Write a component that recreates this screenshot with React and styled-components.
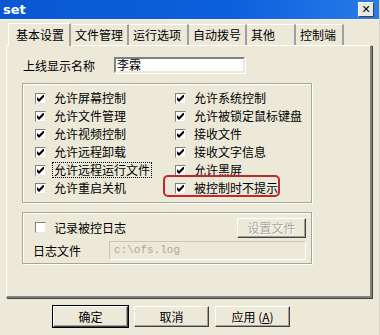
import React from 'react'
import styled, { createGlobalStyle } from 'styled-components'

const GlobalStyle = createGlobalStyle`
  html, body {
    margin: 0;
    padding: 0;
    background: #ece9d8;
  }
  body {
    font-family: "Noto Sans CJK SC", "DejaVu Sans", sans-serif;
    font-size: 12px;
    color: #000;
  }
`

const leftItems = ['允许屏幕控制', '允许文件管理', '允许视频控制', '允许远程卸载', '允许远程运行文件', '允许重启关机']
const rightItems = ['允许系统控制', '允许被锁定鼠标键盘', '接收文件', '接收文字信息', '允许黑屏', '被控制时不提示']
const tabs = [
  { label: '基本设置', width: 63 },
  { label: '文件管理', width: 58 },
  { label: '运行选项', width: 60 },
  { label: '自动拨号', width: 58 },
  { label: '其他', width: 49 },
  { label: '控制端', width: 48 },
]

const Check = ({ checked }) => (
  <Box>
    {checked && (
      <svg width="7" height="7" viewBox="0 0 7 7">
        <path d="M0 2 L2 4 L7 -1 L7 2 L2 7 L0 5 Z" />
      </svg>
    )}
  </Box>
)

export default function App() {
  return (
    <Window>
      <GlobalStyle />
      <TitleBar>
        <span>set</span>
        <CloseButton>✕</CloseButton>
      </TitleBar>

      <TabStrip>
        {tabs.map((t, i) => (
          <Tab key={t.label} active={i === 0} width={t.width}>{t.label}</Tab>
        ))}
      </TabStrip>

      <Panel>
        <NameRow>
          <NameLabel>上线显示名称</NameLabel>
          <TextInput>李霖</TextInput>
        </NameRow>

        <GroupBox>
          <Grid>
            {leftItems.map((label, i) => (
              <React.Fragment key={label}>
                <CheckRow>
                  <Check checked />
                  <Label focused={i === 4}>{label}</Label>
                </CheckRow>
                <CheckRow highlight={i === 5}>
                  <Check checked />
                  <Label>{rightItems[i]}</Label>
                </CheckRow>
              </React.Fragment>
            ))}
          </Grid>
        </GroupBox>

        <LogGroup>
          <LogRow>
            <CheckRow>
              <Check checked={false} />
              <Label>记录被控日志</Label>
            </CheckRow>
            <Button disabled>设置文件</Button>
          </LogRow>
          <LogRow>
            <FileLabel>日志文件</FileLabel>
            <DisabledInput>c:\ofs.log</DisabledInput>
          </LogRow>
        </LogGroup>
      </Panel>

      <ButtonBar>
        <Button primary>确定</Button>
        <Button>取消</Button>
        <Button>应用 (<u>A</u>)</Button>
      </ButtonBar>
    </Window>
  )
}

const Window = styled.div`
  width: 380px;
  height: 335px;
  background: #ece9d8;
  display: flex;
  flex-direction: column;
  overflow: hidden;
  border-right: 1px solid #d4d0c8;
  box-sizing: border-box;
`

const TitleBar = styled.div`
  height: 19px;
  flex: none;
  display: flex;
  align-items: center;
  justify-content: space-between;
  padding: 0 5px 0 3px;
  background: linear-gradient(90deg, #0a57d4 0%, #0c5fdc 60%, #2a7be8 100%);
  color: #fff;
  font-family: "DejaVu Sans", "Liberation Sans", sans-serif;
  font-weight: bold;
  font-size: 13px;
  border-bottom: 1px solid #f4f4f0;
`

const CloseButton = styled.div`
  width: 14px;
  height: 13px;
  display: flex;
  align-items: center;
  justify-content: center;
  background: #e8e8e4;
  border: 1px solid #fff;
  border-right-color: #404040;
  border-bottom-color: #404040;
  color: #000;
  font-size: 11px;
  font-weight: bold;
  line-height: 1;
`

const TabStrip = styled.div`
  display: flex;
  align-items: flex-end;
  height: 23px;
  margin-top: 2px;
  padding-left: 8px;
  flex: none;
  position: relative;
  z-index: 1;
`

const Tab = styled.div`
  width: ${({ width }) => width}px;
  height: ${({ active }) => (active ? 23 : 21)}px;
  box-sizing: border-box;
  padding-left: ${({ active }) => (active ? 7 : 4)}px;
  padding-top: ${({ active }) => (active ? 3 : 2)}px;
  line-height: 16px;
  white-space: nowrap;
  background: #ece9d8;
  border-top: 1px solid #fff;
  border-left: ${({ active }) => (active ? '1px solid #fff' : 'none')};
  border-right: 2px solid #a0a0a0;
  margin-bottom: ${({ active }) => (active ? -1 : 0)}px;
`

const Panel = styled.div`
  margin: 0 7px 0 6px;
  height: 253px;
  flex: none;
  box-sizing: border-box;
  border: 1px solid #fff;
  border-right: 2px solid #808080;
  border-bottom: 2px solid #808080;
  box-shadow: 1px 1px 0 #404040;
  padding: 10px 0 0 15px;
  display: flex;
  flex-direction: column;
`

const NameRow = styled.div`
  display: flex;
  align-items: center;
  height: 18px;
  gap: 12px;
`

const NameLabel = styled.span`
  width: 79px;
  padding-left: 1px;
`

const TextInput = styled.div`
  width: 131px;
  height: 16px;
  box-sizing: border-box;
  background: #fff;
  border: 2px solid #808080;
  border-right-color: #ece9d8;
  border-bottom-color: #ece9d8;
  padding-left: 1px;
  line-height: 12px;
  box-shadow: 1px 1px 0 #fff;
`

const GroupBox = styled.div`
  margin-top: 9px;
  width: 290px;
  height: 120px;
  box-sizing: border-box;
  border: 1px solid #a6a59c;
  box-shadow: inset 1px 1px 0 #fff, 1px 1px 0 #fff;
  padding: 5px 0 0 12px;
`

const Grid = styled.div`
  display: grid;
  grid-template-columns: 140px 1fr;
  grid-auto-rows: 18px;
`

const CheckRow = styled.div`
  display: flex;
  align-items: center;
  gap: 7px;
  position: relative;

  ${({ highlight }) =>
    highlight &&
    `&::after {
      content: '';
      position: absolute;
      left: -12px;
      top: -4px;
      width: 117px;
      height: 22px;
      box-sizing: border-box;
      border: 2px solid #c3262b;
      border-radius: 5px;
    }`}
`

const Box = styled.span`
  width: 11px;
  height: 11px;
  flex: none;
  box-sizing: border-box;
  background: #fff;
  border: 1px solid #808080;
  border-right-color: #e6e6e6;
  border-bottom-color: #e6e6e6;
  display: flex;
  align-items: center;
  justify-content: center;

  svg path {
    fill: #000;
  }
`

const Label = styled.span`
  line-height: 14px;
  padding: 0 1px;
  outline: ${({ focused }) => (focused ? '1px dotted #000' : 'none')};
  white-space: nowrap;
`

const LogGroup = styled.div`
  margin-top: 9px;
  width: 290px;
  height: 52px;
  box-sizing: border-box;
  border: 1px solid #a6a59c;
  box-shadow: inset 1px 1px 0 #fff, 1px 1px 0 #fff;
  padding: 4px 5px 0 12px;
  display: flex;
  flex-direction: column;
  gap: 2px;
`

const LogRow = styled.div`
  display: flex;
  align-items: center;
  justify-content: space-between;
  height: 21px;
`

const FileLabel = styled.span`
  margin-left: -2px;
`

const DisabledInput = styled.div`
  width: 197px;
  height: 19px;
  box-sizing: border-box;
  border: 1px solid #c8c6b8;
  border-right-color: #fff;
  border-bottom-color: #fff;
  color: #aca899;
  font-family: "Liberation Mono", monospace;
  font-size: 11px;
  line-height: 17px;
  padding-left: 4px;
`

const Button = styled.div`
  width: ${({ disabled }) => (disabled ? 69 : 75)}px;
  height: ${({ disabled }) => (disabled ? 20 : 21)}px;
  box-sizing: border-box;
  display: flex;
  align-items: center;
  justify-content: center;
  background: #ece9d8;
  border: 1px solid #fff;
  border-right-color: #404040;
  border-bottom-color: #404040;
  box-shadow: inset -1px -1px 0 #a0a0a0;
  color: ${({ disabled }) => (disabled ? '#a9a79b' : '#000')};
  text-shadow: ${({ disabled }) => (disabled ? '1px 1px 0 #fff' : 'none')};
  outline: ${({ primary }) => (primary ? '1px solid #000' : 'none')};
  white-space: nowrap;

  u {
    text-decoration: underline;
  }
`

const ButtonBar = styled.div`
  display: flex;
  gap: 6px;
  padding: 8px 0 0 53px;
`
